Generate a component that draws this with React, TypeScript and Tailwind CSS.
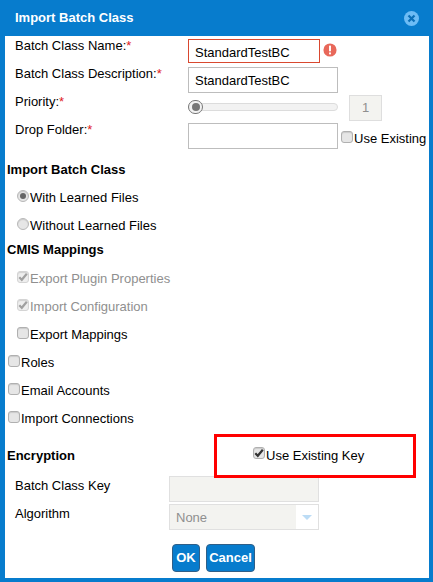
import React from 'react';

const Req = () => <span className="text-[#e02020]">*</span>;

function Check({ checked, disabled }: { checked?: boolean; disabled?: boolean }) {
  return (
    <span className={`relative -top-[2px] mr-px box-border inline-block h-[12px] w-[12px] shrink-0 rounded-[3px] border shadow-[inset_0_1px_1px_rgba(0,0,0,0.12)] ${disabled ? 'border-[#d4d4d4] bg-[#eeeeee]' : 'border-[#b0b0b0] bg-[#e6e6e6]'}`}>
      {checked && (
        <svg viewBox="0 0 12 12" className="absolute -left-px -top-px h-[12px] w-[12px]">
          <path d="M2.3 6.2 L4.8 8.8 L9.8 2.8" fill="none" stroke={disabled ? '#a0a0a0' : '#333333'} strokeWidth="2.2" />
        </svg>
      )}
    </span>
  );
}

function Radio({ checked }: { checked?: boolean }) {
  return (
    <span className="relative -top-[2px] mr-px box-border flex h-[12px] w-[12px] shrink-0 items-center justify-center rounded-full border border-[#b8b8b8] bg-[#e6e6e6] shadow-[inset_0_1px_1px_rgba(0,0,0,0.12)]">
      {checked && <span className="h-[6px] w-[6px] rounded-full bg-[#666666]" />}
    </span>
  );
}

function Option({ children, indent, muted }: { children: React.ReactNode; indent?: boolean; muted?: boolean }) {
  return (
    <div className={`flex h-7 items-center ${indent ? 'pl-[10px]' : 'pl-px'} ${muted ? 'text-[#8f8f8f]' : ''}`}>{children}</div>
  );
}

function FieldRow({ label, children }: { label: React.ReactNode; children: React.ReactNode }) {
  return (
    <div className="flex h-7">
      <div className="w-[181px] pl-[8px] pt-px leading-[15px]">{label}</div>
      <div className="flex items-center">{children}</div>
    </div>
  );
}

export default function App() {
  return (
    <div className="h-[582px] w-[433px] bg-[#077ccd] font-['Liberation_Sans',Arial,sans-serif] text-[13px] text-black">
      <div className="flex h-9 items-center justify-between pl-[15px] pr-[14px]">
        <h1 className="text-[13px] font-bold text-white">Import Batch Class</h1>
        <svg viewBox="0 0 16 16" className="h-[15px] w-[15px]">
          <circle cx="8" cy="8" r="8" fill="#6dbcf5" />
          <path d="M4.8 4.8 L11.2 11.2 M11.2 4.8 L4.8 11.2" stroke="#0a6fb8" strokeWidth="2.4" />
        </svg>
      </div>

      <div className="relative ml-[5px] h-[542px] w-[424px] bg-white pl-[2px] pt-px">
        <FieldRow label={<>Batch Class Name:<Req /></>}>
          <input readOnly value="StandardTestBC" className="mb-px mt-px box-border h-6 w-[132px] border border-[#d9482f] px-[6px] pt-[2px] outline-none" />
          <svg viewBox="0 0 16 16" className="mb-[2px] ml-[3px] h-[14px] w-[14px]">
            <circle cx="8" cy="8" r="7.5" fill="#e8685a" />
            <rect x="6.9" y="3" width="2.2" height="6.5" fill="#ffffff" />
            <rect x="6.9" y="10.8" width="2.2" height="2.2" fill="#ffffff" />
          </svg>
        </FieldRow>
        <FieldRow label={<>Batch Class Description:<Req /></>}>
          <input readOnly value="StandardTestBC" className="mt-[2px] box-border h-[26px] w-[150px] border border-[#bdbdbd] px-[6px] outline-none" />
        </FieldRow>
        <FieldRow label={<>Priority:<Req /></>}>
          <div className="relative h-2 w-[150px] rounded-full border border-[#dcdcdc] bg-[#f2f2f2]">
            <span className="absolute -left-px -top-[4px] flex h-[14px] w-[15px] items-center justify-center rounded-full border border-[#777] bg-[#f2f2f2]">
              <span className="h-2 w-2 rounded-full bg-[#777]" />
            </span>
          </div>
          <div className="ml-[11px] mt-[2px] box-border flex h-[26px] w-[33px] items-center justify-center border border-[#dedede] bg-[#f3f3f0] text-[#8f8f8f]">1</div>
        </FieldRow>
        <FieldRow label={<>Drop Folder:<Req /></>}>
          <input readOnly className="mt-[2px] box-border h-[26px] w-[150px] border border-[#bdbdbd] outline-none" />
          <span className="ml-[3px] mt-[7px] flex items-center">
            <Check />
            Use Existing
          </span>
        </FieldRow>

        <h2 className="pt-[13px] font-bold leading-[15px]">Import Batch Class</h2>
        <div className="pt-[7px]">
          <Option indent><Radio checked />With Learned Files</Option>
          <Option indent><Radio />Without Learned Files</Option>
        </div>
        <h2 className="mt-[2px] h-[15px] font-bold leading-[15px]">CMIS Mappings</h2>
        <div className="pt-[8px]">
          <Option indent muted><Check checked disabled />Export Plugin Properties</Option>
          <Option indent muted><Check checked disabled />Import Configuration</Option>
          <Option indent><Check />Export Mappings</Option>
          <Option><Check />Roles</Option>
          <Option><Check />Email Accounts</Option>
          <Option><Check />Import Connections</Option>
        </div>

        <h2 className="pt-[15px] font-bold leading-[15px]">Encryption</h2>

        <div className="mt-[9px] flex h-7 items-start pl-[8px]">
          <span className="w-[154px] pt-[4px]">Batch Class Key</span>
          <div className="mt-[4px] box-border h-[26px] w-[150px] border border-[#e0e0e0] bg-[#f3f3f0]" />
        </div>
        <div className="flex h-7 items-start pl-[8px]">
          <span className="w-[154px] pt-[4px]">Algorithm</span>
          <div className="mt-[4px] box-border flex h-[26px] w-[150px] border border-[#e0e0e0] bg-[#f3f3f0] text-[#8f8f8f]">
            <span className="flex-1 pl-[6px] leading-[26px]">None</span>
            <span className="flex w-[22px] items-center justify-center bg-white">
              <span className="h-0 w-0 border-x-[5px] border-t-[5px] border-x-transparent border-t-[#bcdcf5]" />
            </span>
          </div>
        </div>

        <div className="mt-[16px] flex gap-[6px] pl-[165px]">
          <button className="box-border h-7 w-[28px] rounded-[4px] border border-[#2f5f88] bg-[#077ccd] text-[13px] font-bold text-white">OK</button>
          <button className="box-border h-7 w-[49px] rounded-[4px] border border-[#2f5f88] bg-[#077ccd] text-[13px] font-bold text-white">Cancel</button>
        </div>

        <div className="absolute left-[209px] top-[398px] box-border flex h-[44px] w-[202px] items-center border-[3px] border-[#ff0000] pb-[1px] pl-[36px]">
          <span className="-mt-[2px] flex">
            <Check checked />
          </span>
          Use Existing Key
        </div>
      </div>
    </div>
  );
}
